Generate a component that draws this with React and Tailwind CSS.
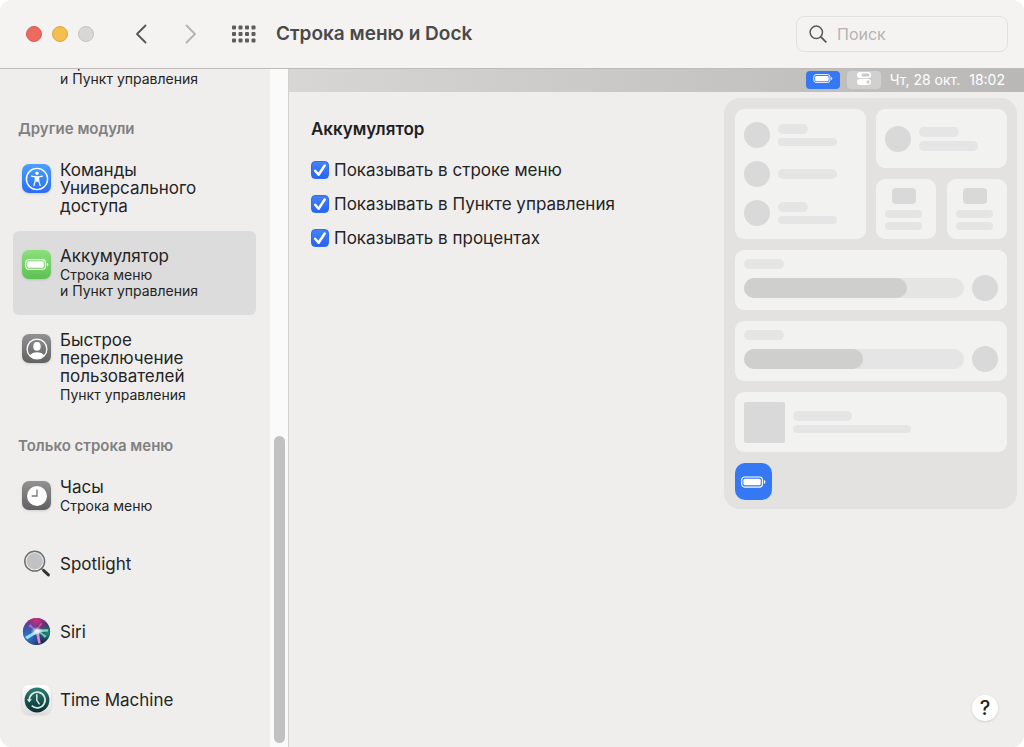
import React from "react";

function BatteryGlyph({ className }) {
  return (
    <svg viewBox="0 0 26 12" className={className} fill="none" aria-hidden="true">
      <rect x="0.75" y="0.75" width="21.5" height="10.5" rx="3" stroke="#fff" strokeWidth="1.2" />
      <rect x="2.5" y="2.5" width="18" height="7" rx="1.6" fill="#fff" />
      <path d="M23.8 4v4c1-.3 1.6-1.100 1.600-2s-.6-1.700-1.600-2z" fill="#fff" />
    </svg>
  );
}

function AccessibilityIcon() {
  return (
    <span className="flex size-[29px] items-center justify-center rounded-[7px] bg-linear-to-b from-[#4da0fa] to-[#2b6cf4] shadow-sm">
      <svg viewBox="0 0 24 24" className="size-6" fill="none" aria-hidden="true">
        <circle cx="12" cy="12" r="10.6" stroke="#fff" strokeWidth="1.400" />
        <circle cx="12" cy="6.200" r="1.700" fill="#fff" />
        <path
          d="M6.600 9.200 10.400 9.900v3.300L8.900 18.700M17.400 9.200 13.600 9.900v3.300l1.500 5.500"
          stroke="#fff"
          strokeWidth="1.300"
          strokeLinecap="round"
          strokeLinejoin="round"
        />
        <path d="M10.200 9.200h3.600v4.300l-.6 1.200h-2.400l-.6-1.200z" fill="#fff" />
      </svg>
    </span>
  );
}

function BatteryIcon() {
  return (
    <span className="flex size-[29px] items-center justify-center rounded-[7px] bg-linear-to-b from-[#8ce07c] to-[#5cc053] shadow-sm">
      <BatteryGlyph className="h-[11px] w-6" />
    </span>
  );
}

function UserIcon() {
  return (
    <span className="flex size-[29px] items-center justify-center rounded-[7px] bg-linear-to-b from-[#929292] to-[#616163] shadow-sm">
      <svg viewBox="0 0 24 24" className="size-6" aria-hidden="true">
        <circle cx="12" cy="12" r="9.900" fill="none" stroke="#fff" strokeWidth="1.300" />
        <ellipse cx="12" cy="9.400" rx="3.700" ry="4.300" fill="#fff" />
        <path d="M5 18.600c1.200-2.300 3.900-3.300 7-3.300s5.800 1 7 3.300A9.700 9.700 0 0 1 12 21.700a9.700 9.700 0 0 1-7-3.100z" fill="#fff" />
      </svg>
    </span>
  );
}

function ClockIcon() {
  return (
    <span className="flex size-[29px] items-center justify-center rounded-[7px] bg-linear-to-b from-[#929292] to-[#616163] shadow-sm">
      <svg viewBox="0 0 24 24" className="size-6" aria-hidden="true">
        <circle cx="12" cy="12" r="10" fill="#fff" />
        <path d="M12 5.500V12H6.700" fill="none" stroke="#777" strokeWidth="1.300" />
      </svg>
    </span>
  );
}

function SpotlightIcon() {
  return (
    <svg viewBox="0 0 29 29" className="size-[29px]" aria-hidden="true">
      <path d="M19.500 19.500l2.900 2.700" stroke="#777" strokeWidth="2" />
      <path d="M21.800 21.700l4.600 4.200" stroke="#333" strokeWidth="3" strokeLinecap="round" />
      <circle cx="12.700" cy="12.200" r="9.900" fill="#eeeeee" stroke="#6b6f70" strokeWidth="1.500" />
      <circle cx="12.700" cy="12.200" r="8.200" fill="#c2c1c3" />
    </svg>
  );
}

function SiriIcon() {
  return (
    <svg viewBox="0 0 29 29" className="size-[29px]" aria-hidden="true">
      <defs>
        <linearGradient id="siri-base" x1="0" y1="0" x2="1" y2="1">
          <stop offset="0" stopColor="#5b2a9a" />
          <stop offset="0.5" stopColor="#2c2a6c" />
          <stop offset="1" stopColor="#13273f" />
        </linearGradient>
        <radialGradient id="siri-pink" cx="0.5" cy="0.100" r="0.550">
          <stop offset="0" stopColor="#c9307f" />
          <stop offset="1" stopColor="#c9307f" stopOpacity="0" />
        </radialGradient>
        <radialGradient id="siri-blue" cx="0.150" cy="0.700" r="0.600">
          <stop offset="0" stopColor="#2a7fd8" />
          <stop offset="1" stopColor="#2a7fd8" stopOpacity="0" />
        </radialGradient>
        <radialGradient id="siri-green" cx="0.900" cy="0.550" r="0.350">
          <stop offset="0" stopColor="#1d8c70" />
          <stop offset="1" stopColor="#1d8c70" stopOpacity="0" />
        </radialGradient>
        <radialGradient id="siri-glow">
          <stop offset="0" stopColor="#fff" />
          <stop offset="1" stopColor="#bff" stopOpacity="0" />
        </radialGradient>
      </defs>
      <circle cx="14.500" cy="14.500" r="13.600" fill="url(#siri-base)" />
      <circle cx="14.500" cy="14.500" r="13.600" fill="url(#siri-pink)" />
      <circle cx="14.500" cy="14.500" r="13.600" fill="url(#siri-blue)" />
      <circle cx="14.500" cy="14.500" r="13.600" fill="url(#siri-green)" />
      <path d="M15.800 12.600 3 20 5.200 22.200 16.500 15.400z" fill="#a5f0f8" opacity=".9" />
      <path d="M14 12.400 26.300 12.200 26.200 14.400 14 15.600z" fill="#8debcb" opacity=".85" />
      <path d="M14.500 12.800 24.800 18.800 22.800 21z" fill="#8fead8" opacity=".7" />
      <path d="M13.500 13.500 16.200 26.600 18.700 26.200 16.500 13.500z" fill="#f08ad8" opacity=".95" />
      <path d="M15.500 15 6.500 9.200 8.300 7z" fill="#c886f0" opacity=".6" />
      <path d="M13.500 14.500 18.500 6 20.200 7z" fill="#f28ac8" opacity=".5" />
      <ellipse cx="15" cy="14.200" rx="6.500" ry="4.500" fill="url(#siri-glow)" />
      <ellipse cx="15" cy="14.200" rx="4" ry="2.800" fill="url(#siri-glow)" />
    </svg>
  );
}

function TimeMachineIcon() {
  return (
    <span className="flex size-[29px] items-center justify-center rounded-[7px] bg-linear-to-b from-white to-[#dedede] shadow-sm">
      <svg viewBox="0 0 26 26" className="size-[26px]" fill="none" aria-hidden="true">
        <defs>
          <linearGradient id="tm-disc" x1="0" y1="0" x2="0" y2="1">
            <stop offset="0" stopColor="#2b7f75" />
            <stop offset="1" stopColor="#0b2c30" />
          </linearGradient>
        </defs>
        <circle cx="13" cy="13" r="12.400" fill="url(#tm-disc)" />
        <path d="M5.300 13a7.900 7.900 0 1 1 2.400 5.700" stroke="#d8ebe7" strokeWidth="1.700" />
        <path d="M2.800 12.300h5l-2.500 3.200z" fill="#d8ebe7" />
        <path d="M12.800 7.800v5.500l2.400 3.500" stroke="#d8ebe7" strokeWidth="1.500" strokeLinecap="round" />
      </svg>
    </span>
  );
}

function SidebarItem({ icon, title, details = [], selected }) {
  return (
    <li>
      <button
        type="button"
        aria-current={selected ? "true" : undefined}
        className={
          "flex min-h-[68px] w-full items-start gap-[9px] rounded-md pl-[9px] pr-10 text-left " +
          (selected ? "bg-[#dcdcdc]" : "")
        }
      >
        <span className="mt-[19px] w-[29px] shrink-0">{icon}</span>
        <span className={title ? "flex flex-col gap-0.5 self-center py-4" : "flex flex-col self-end pb-[15px]"}>
          {title && <span className="text-[17px] leading-[18px]">{title}</span>}
          {details.length > 0 && (
            <span className="flex flex-col text-sm leading-4">
              {details.map((line) => (
                <span key={line} className="whitespace-nowrap">{line}</span>
              ))}
            </span>
          )}
        </span>
      </button>
    </li>
  );
}

function SidebarHeading({ children }) {
  return (
    <h2 className="px-[5px] pt-[18px] pb-[7px] text-[15px] leading-[18px] font-semibold text-[#808080]">
      {children}
    </h2>
  );
}

function Sidebar() {
  return (
    <nav className="flex w-[270px] shrink-0 flex-col justify-end overflow-hidden pr-[14px] pb-[13px] pl-[13px] text-[#242424]">
      <ul className="shrink-0">
        <SidebarItem details={["Строка меню", "и Пункт управления"]} />
      </ul>
      <SidebarHeading>Другие модули</SidebarHeading>
      <ul className="shrink-0">
        <SidebarItem icon={<AccessibilityIcon />} title="Команды Универсального доступа" />
        <SidebarItem
          icon={<BatteryIcon />}
          title="Аккумулятор"
          details={["Строка меню", "и Пункт управления"]}
          selected
        />
        <SidebarItem
          icon={<UserIcon />}
          title="Быстрое переключение пользователей"
          details={["Пункт управления"]}
        />
      </ul>
      <SidebarHeading>Только строка меню</SidebarHeading>
      <ul className="shrink-0">
        <SidebarItem icon={<ClockIcon />} title="Часы" details={["Строка меню"]} />
        <SidebarItem icon={<SpotlightIcon />} title="Spotlight" />
        <SidebarItem icon={<SiriIcon />} title="Siri" />
        <SidebarItem icon={<TimeMachineIcon />} title="Time Machine" />
      </ul>
    </nav>
  );
}

function Toolbar() {
  return (
    <header className="flex h-[69px] shrink-0 items-center border-b border-[#bdbcbb] bg-[#f4f3f1] pr-4 pl-[26px]">
      <div className="flex gap-[10px]">
        <button type="button" aria-label="Закрыть" className="size-4 rounded-full border border-[#d85a50] bg-[#ed6a5f]" />
        <button type="button" aria-label="Свернуть" className="size-4 rounded-full border border-[#dda53f] bg-[#f5bf4f]" />
        <button type="button" aria-label="Развернуть" className="size-4 rounded-full border border-[#c5c4c3] bg-[#d8d7d6]" />
      </div>
      <button type="button" aria-label="Назад" className="ml-10">
        <svg viewBox="0 0 14 20" className="h-5 w-[14px]" fill="none" aria-hidden="true">
          <path d="M11.500 1.500 3 10l8.500 8.500" stroke="#555" strokeWidth="1.800" strokeLinecap="round" strokeLinejoin="round" />
        </svg>
      </button>
      <button type="button" aria-label="Вперёд" className="ml-9">
        <svg viewBox="0 0 14 20" className="h-5 w-[14px]" fill="none" aria-hidden="true">
          <path d="M2.500 1.500 11 10l-8.500 8.500" stroke="#b4b4b3" strokeWidth="1.800" strokeLinecap="round" strokeLinejoin="round" />
        </svg>
      </button>
      <button type="button" aria-label="Все настройки" className="ml-[34px]">
        <svg viewBox="0 0 24 18" className="h-[18px] w-6" fill="#5c5c5b" aria-hidden="true">
          {[0, 6.5, 13, 19.5].map((x) =>
            [0.5, 7, 13.5].map((y) => <rect key={`${x}-${y}`} x={x} y={y} width="4" height="4" rx="1" />)
          )}
        </svg>
      </button>
      <h1 className="ml-5 text-[19px] font-semibold whitespace-nowrap text-[#4a4a4a]">Строка меню и Dock</h1>
      <label className="ml-auto flex h-9 w-[212px] items-center gap-[10px] rounded-lg border border-[#e2e1df] bg-[#f4f3f1] pl-3">
        <svg viewBox="0 0 18 18" className="size-[18px] shrink-0" fill="none" aria-hidden="true">
          <circle cx="7.300" cy="7.300" r="6.200" stroke="#5a5a5a" strokeWidth="1.500" />
          <path d="m11.900 11.900 4.900 4.900" stroke="#5a5a5a" strokeWidth="1.900" strokeLinecap="round" />
        </svg>
        <input
          type="text"
          aria-label="Поиск"
          placeholder="Поиск"
          className="w-full min-w-0 bg-transparent text-base text-[#333] outline-none placeholder:text-[#b5b4b3]"
        />
      </label>
    </header>
  );
}

function MenuBarPreview() {
  return (
    <div className="flex h-[23px] shrink-0 items-center justify-end bg-linear-to-r from-[#d7d6d5] to-[#b9b8b7] pr-[19px] pb-0.5 text-sm text-white">
      <span className="flex h-[18px] w-[34px] justify-center rounded bg-[#3478f6] pt-[3px]">
        <BatteryGlyph className="h-[9px] w-5" />
      </span>
      <span className="ml-[7px] flex h-[18px] w-[34px] justify-center rounded bg-[#d1d0d0] pt-px">
        <svg viewBox="0 0 14 13" className="h-[13px] w-[14px]" aria-hidden="true">
          <rect x="0" y="0" width="14" height="6" rx="3" fill="#fff" />
          <rect x="4.500" y="1.500" width="8" height="3" rx="1.500" fill="#c9c8c8" />
          <rect x="0" y="7" width="14" height="6" rx="3" fill="#fff" />
          <circle cx="11" cy="10" r="1.700" fill="#d1d0d0" />
        </svg>
      </span>
      <span className="ml-[9px] whitespace-nowrap">Чт, 28 окт.</span>
      <span className="ml-[9px]">18:02</span>
    </div>
  );
}

function Option({ children }) {
  return (
    <label className="flex items-center gap-[5px] text-[17px] leading-[18px]">
      <span className="grid size-[18px] shrink-0">
        <input
          type="checkbox"
          defaultChecked
          className="peer col-start-1 row-start-1 size-[18px] appearance-none rounded border border-[#b9b9b9] bg-white checked:border-[#2f6cf0] checked:bg-linear-to-b checked:from-[#4382f7] checked:to-[#2a62f0]"
        />
        <svg
          viewBox="0 0 18 18"
          className="pointer-events-none invisible col-start-1 row-start-1 size-[18px] peer-checked:visible"
          fill="none"
          aria-hidden="true"
        >
          <path d="m4.200 9.800 3.400 4L13.700 4.500" stroke="#fff" strokeWidth="2.500" strokeLinecap="round" strokeLinejoin="round" />
        </svg>
      </span>
      {children}
    </label>
  );
}

const card = "rounded-[9px] bg-[#f2f2f1]";

function Dot() {
  return <div className="size-[26px] shrink-0 rounded-full bg-[#d9d9d9]" />;
}

function ToggleRow({ short = true }) {
  return (
    <div className="flex h-[26px] items-center gap-2">
      <Dot />
      <div className="flex flex-col gap-1">
        {short && <div className="h-[10px] w-[30px] rounded-full bg-[#e5e5e5]" />}
        <div className={short ? "h-2 w-[59px] rounded-full bg-[#e5e5e5]" : "h-[10px] w-[59px] rounded-full bg-[#e5e5e5]"} />
      </div>
    </div>
  );
}

function SmallCard() {
  return (
    <div className={`${card} flex h-[60px] flex-col items-start pt-[9px] pl-[9px]`}>
      <div className="flex w-[37px] flex-col items-center">
        <div className="h-4 w-6 rounded bg-[#d9d9d9]" />
        <div className="mt-1.5 h-2 w-full rounded-full bg-[#e5e5e5]" />
        <div className="mt-1 h-2 w-full rounded-full bg-[#e5e5e5]" />
      </div>
    </div>
  );
}

function SliderCard({ level }) {
  return (
    <div className={`${card} h-[60px] px-[9px] pt-[9px]`}>
      <div className="h-[10px] w-10 rounded-full bg-[#e5e5e5]" />
      <div className="mt-1.5 flex items-center gap-2">
        <div className="h-5 flex-1 rounded-full bg-[#e5e5e5]">
          <div className="h-5 rounded-full bg-[#cfcfcd]" style={{ width: `${level}%` }} />
        </div>
        <Dot />
      </div>
    </div>
  );
}

function ControlCenterPreview() {
  return (
    <div className="mt-1.5 mr-[7px] flex w-[293px] shrink-0 flex-col gap-[11px] self-start rounded-2xl bg-[#e3e2e1] pt-[11px] pr-[10px] pb-[9px] pl-[11px]">
      <div className="grid grid-cols-2 gap-[10px]">
        <div className={`${card} flex flex-col justify-between py-[13px] pl-[9px]`}>
          <ToggleRow />
          <ToggleRow short={false} />
          <ToggleRow />
        </div>
        <div className="flex flex-col gap-[11px]">
          <div className={`${card} flex h-[59px] items-center gap-2 pl-[9px]`}>
            <Dot />
            <div className="flex flex-col gap-1">
              <div className="h-[10px] w-10 rounded-full bg-[#e5e5e5]" />
              <div className="h-[10px] w-[59px] rounded-full bg-[#e5e5e5]" />
            </div>
          </div>
          <div className="grid grid-cols-2 gap-[11px]">
            <SmallCard />
            <SmallCard />
          </div>
        </div>
      </div>
      <SliderCard level={74} />
      <SliderCard level={54} />
      <div className={`${card} flex h-[60px] items-center gap-2 pl-[9px]`}>
        <div className="size-[41px] rounded-xs bg-[#d9d9d9]" />
        <div className="flex flex-col gap-1">
          <div className="h-[10px] w-[59px] rounded-full bg-[#e5e5e5]" />
          <div className="h-2 w-[118px] rounded-full bg-[#e5e5e5]" />
        </div>
      </div>
      <div className="flex size-[37px] items-center justify-center rounded-[10px] bg-[#3478f6]">
        <BatteryGlyph className="h-3 w-[25px]" />
      </div>
    </div>
  );
}

export default function App() {
  return (
    <div className="h-screen bg-white font-['Inter','Liberation_Sans',sans-serif]">
      <div className="flex h-full flex-col overflow-hidden rounded-xl bg-[#efeeed]">
        <Toolbar />
        <div className="flex min-h-0 flex-1">
          <Sidebar />
          <div className="flex w-[18px] shrink-0 flex-col items-center justify-end bg-[#fafafa] pb-1" aria-hidden="true">
            <div className="h-[45.5%] w-[11px] rounded-full bg-[#c1c1c1]" />
          </div>
          <main className="flex min-w-0 flex-1 flex-col border-l border-[#d2d1d0]">
            <MenuBarPreview />
            <div className="flex flex-1 justify-between">
              <fieldset className="pt-7 pl-[22px] text-[#242424]">
                <legend className="float-left text-[17px] leading-[18px] font-semibold text-[#1f1f1f]">Аккумулятор</legend>
                <div className="clear-both flex flex-col gap-4 pt-[23px]">
                  <Option>Показывать в строке меню</Option>
                  <Option>Показывать в Пункте управления</Option>
                  <Option>Показывать в процентах</Option>
                </div>
              </fieldset>
              <ControlCenterPreview />
            </div>
            <div className="flex justify-end pr-[26px] pb-[26px]">
              <button
                type="button"
                aria-label="Справка"
                className="flex size-[26px] items-center justify-center rounded-full bg-white text-xl leading-none font-medium text-[#222] shadow"
              >
                ?
              </button>
            </div>
          </main>
        </div>
      </div>
    </div>
  );
}
